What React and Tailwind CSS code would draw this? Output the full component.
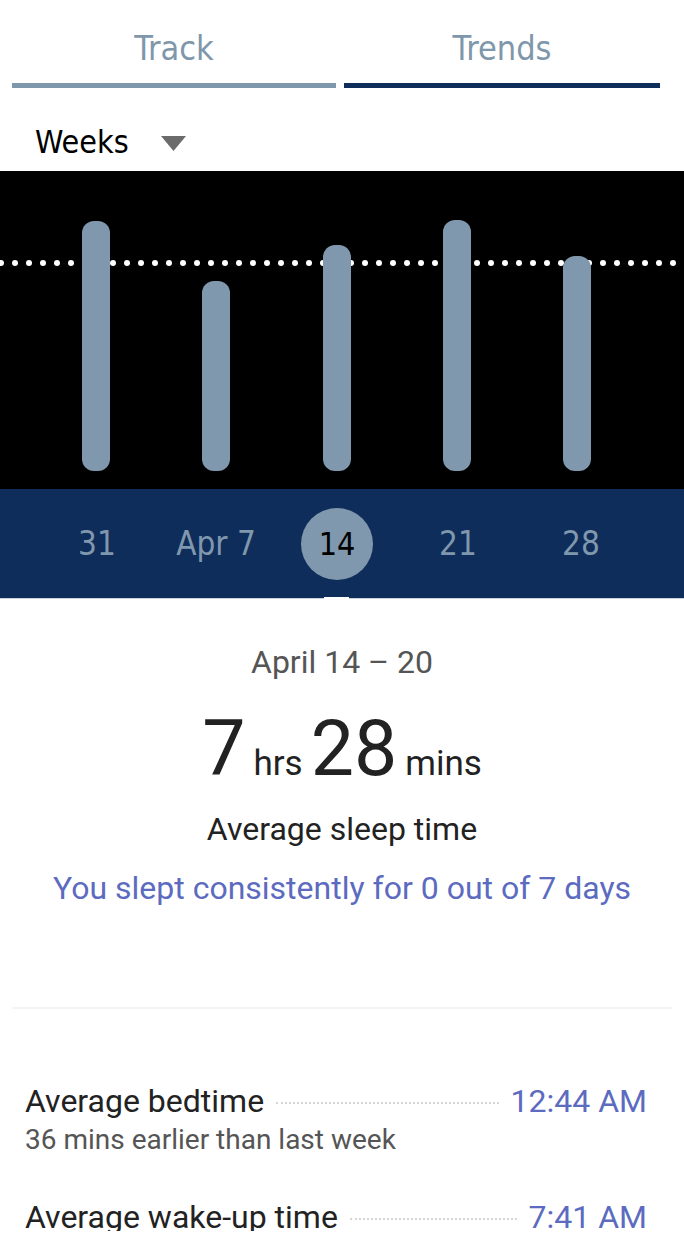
import React from "react";

const bars = [
  { left: 82, top: 221 },
  { left: 202, top: 281 },
  { left: 323, top: 245 },
  { left: 443, top: 220 },
  { left: 563, top: 256 },
];

const dates = [
  { label: "31", x: 97 },
  { label: "Apr 7", x: 216 },
  { label: "14", x: 337 },
  { label: "21", x: 458 },
  { label: "28", x: 581 },
];

const narrow = { fontFamily: '"Liberation Sans Narrow", "DejaVu Sans Condensed", Roboto, sans-serif' };
const roboto = { fontFamily: 'Roboto, "Noto Sans", sans-serif' };

function Row({ label, value, sub }) {
  return (
    <div className="px-[25px]">
      <div className="flex items-center gap-3">
        <span className="text-[32px] leading-[40px] text-[#222] whitespace-nowrap">{label}</span>
        <div className="flex-1 border-t-2 border-dotted border-[#d6d6d6] mt-1" />
        <span className="text-[32px] leading-[40px] text-[#5c6bc0] whitespace-nowrap pr-[12px]">{value}</span>
      </div>
      {sub && <div className="text-[28px] leading-[34px] text-[#555] mt-[2px]">{sub}</div>}
    </div>
  );
}

export default function App() {
  return (
    <div className="w-[684px] h-[1251px] bg-white overflow-hidden">
      <div className="h-[1231px] overflow-hidden" style={roboto}>
        {/* tabs */}
        <div className="flex gap-2 px-[12px] pt-[28px]" style={narrow}>
          <div className="w-[324px] flex flex-col items-center">
            <span className="text-[34px] leading-[40px] text-[#7f97ab]">Track</span>
            <div className="w-full h-[5px] bg-[#7f97ab] mt-[15px]" />
          </div>
          <div className="w-[316px] flex flex-col items-center">
            <span className="text-[34px] leading-[40px] text-[#7f97ab]">Trends</span>
            <div className="w-full h-[5px] bg-[#0f2d5a] mt-[15px]" />
          </div>
        </div>

        {/* period selector */}
        <div className="flex items-center h-[83px] pl-[35px] pt-[24px]" style={narrow}>
          <span className="text-[32px] leading-[38px] text-black">Weeks</span>
          <svg width="25" height="16" viewBox="0 0 25 16" className="ml-[32px] mt-[4px]">
            <polygon points="0,0 25,0 12.5,15" fill="#6b6b6b" />
          </svg>
        </div>

        {/* chart */}
        <div className="relative h-[318px] bg-black overflow-hidden">
          <div className="absolute left-0 right-0 top-[89px] flex gap-[8px] -ml-[2px]">
            {Array.from({ length: 52 }).map((_, i) => (
              <span key={i} className="shrink-0 w-[6px] h-[6px] rounded-full bg-white" />
            ))}
          </div>
          {bars.map((b, i) => (
            <div
              key={i}
              className="absolute w-[28px] rounded-[12px] bg-[#8098ad]"
              style={{ left: b.left, top: b.top - 171, bottom: 18 }}
            />
          ))}
        </div>

        {/* dates band */}
        <div className="relative h-[110px] bg-[#0f2d5a] border-b border-[#c8d0dc]" style={narrow}>
          {dates.map((d) => (
            <div
              key={d.label}
              className="absolute top-0 bottom-0 w-[100px] flex justify-center items-center"
              style={{ left: d.x - 50 }}
            >
              {d.label === "14" ? (
                <span className="w-[72px] h-[72px] rounded-full bg-[#8098ad] text-black text-[32px] flex items-center justify-center">14</span>
              ) : (
                <span className="text-[33px] text-[#8098ad]">{d.label}</span>
              )}
            </div>
          ))}
          <div className="absolute left-[324px] w-[25px] h-[2px] -bottom-[1px] bg-white" />
        </div>

        {/* summary */}
        <div className="flex flex-col items-center pt-[44px]">
          <div className="text-[32px] leading-[38px] text-[#555]">April 14 – 20</div>
          <div className="flex items-baseline mt-[23px] text-[#222] leading-[90px]">
            <span className="text-[77px]">7</span>
            <span className="text-[35px] ml-[8px]">hrs</span>
            <span className="text-[77px] ml-[8px]">28</span>
            <span className="text-[35px] ml-[8px]">mins</span>
          </div>
          <div className="text-[32px] leading-[38px] text-[#222] mt-[1px]">Average sleep time</div>
          <div className="text-[32px] leading-[38px] text-[#5c6bc0] mt-[21px]">You slept consistently for 0 out of 7 days</div>
        </div>

        <div className="mx-[12px] mt-[100px] border-t-2 border-[#f4f4f4]" />

        <div className="pt-[72px] flex flex-col gap-[40px]">
          <Row label="Average bedtime" value="12:44 AM" sub="36 mins earlier than last week" />
          <Row label="Average wake-up time" value="7:41 AM" />
        </div>
      </div>
    </div>
  );
}
